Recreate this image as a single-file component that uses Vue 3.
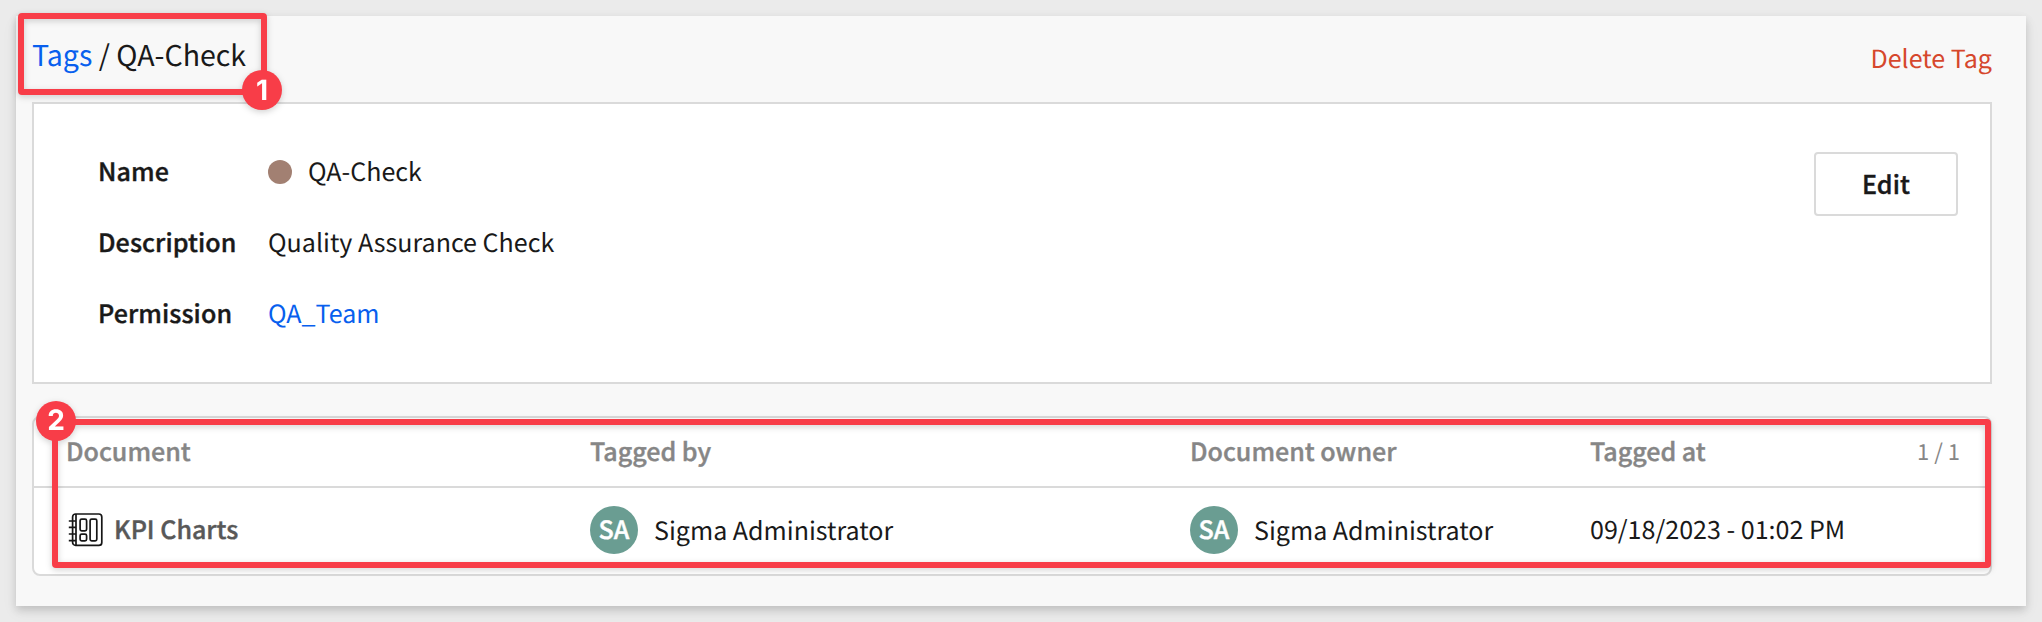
<script setup>
const columns = ['Document', 'Tagged by', 'Document owner', 'Tagged at']
const documents = [
  {
    name: 'KPI Charts',
    taggedBy: { initials: 'SA', name: 'Sigma Administrator' },
    owner: { initials: 'SA', name: 'Sigma Administrator' },
    taggedAt: '09/18/2023 - 01:02 PM',
  },
]
</script>

<template>
  <div class="page">
    <main class="panel">
      <header class="top">
        <h1 class="crumbs"><a class="link">Tags</a> / QA-Check</h1>
        <a class="delete">Delete Tag</a>
      </header>

      <section class="card">
        <dl class="fields">
          <div class="field">
            <dt>Name</dt>
            <dd><span class="dot"></span>QA-Check</dd>
          </div>
          <div class="field">
            <dt>Description</dt>
            <dd>Quality Assurance Check</dd>
          </div>
          <div class="field">
            <dt>Permission</dt>
            <dd><a class="link">QA_Team</a></dd>
          </div>
        </dl>
        <button class="edit">Edit</button>
      </section>

      <section class="table">
        <div class="row head">
          <span v-for="c in columns" :key="c">{{ c }}</span>
          <span class="count">1 / 1</span>
        </div>
        <div v-for="d in documents" :key="d.name" class="row body">
          <div class="doc">
            <svg class="icon" width="36" height="36" viewBox="0 0 36 36" fill="none" stroke="#161616" stroke-width="1.7">
              <rect x="4.6" y="2" width="29.2" height="31.4" rx="3" />
              <path d="M8 2V33.4M0.8 9H8M0.8 15.3H8M0.8 22H8M0.8 28.7H8" />
              <rect x="12.1" y="7.1" width="6.5" height="11.8" rx="1.6" />
              <rect x="12.1" y="22.1" width="6.5" height="6.8" rx="1.6" />
              <rect x="22.1" y="7.1" width="6.7" height="21.8" rx="1.6" />
            </svg>
            <span>{{ d.name }}</span>
          </div>
          <div class="person"><span class="avatar">{{ d.taggedBy.initials }}</span><span>{{ d.taggedBy.name }}</span></div>
          <div class="person"><span class="avatar">{{ d.owner.initials }}</span><span>{{ d.owner.name }}</span></div>
          <div class="when">{{ d.taggedAt }}</div>
        </div>
      </section>
    </main>

    <div class="callout first"><span class="badge">1</span></div>
    <div class="callout second"><span class="badge">2</span></div>
  </div>
</template>

<style>
body {
  margin: 0;
  background: #ebebeb;
}
</style>

<style scoped>
.page {
  position: relative;
  box-sizing: border-box;
  height: 622px;
  padding: 16px;
  overflow: hidden;
  background: #ebebeb;
  color: #191919;
  font: 400 25.05px/40px "Noto Sans CJK JP", "Noto Sans CJK SC", sans-serif;
  text-rendering: geometricPrecision;
  white-space: nowrap;
}
.panel {
  box-sizing: border-box;
  height: 590px;
  padding: 0 34px 0 16px;
  background: #f8f8f8;
  box-shadow: 0 4px 8px rgba(0, 0, 0, 0.15), 0 6px 16px rgba(0, 0, 0, 0.05);
}
.top {
  display: flex;
  justify-content: space-between;
  align-items: flex-start;
  height: 86px;
}
.crumbs {
  margin: 18px 0 0;
  font-weight: 400;
  font-size: 28.55px;
  line-height: 41px;
}
.link {
  color: #085fee;
}
.delete {
  margin-top: 22px;
  color: #d6472c;
}
.card {
  box-sizing: border-box;
  display: flex;
  justify-content: space-between;
  align-items: flex-start;
  height: 282px;
  padding: 47px 32px 0 64px;
  border: 2px solid #dadada;
  background: #fff;
}
.fields {
  display: grid;
  row-gap: 31px;
  margin: 0;
}
.field {
  display: grid;
  grid-template-columns: 170px auto;
}
.field dt {
  font-weight: 500;
  letter-spacing: 0.1px;
  -webkit-text-stroke: 0.4px currentColor;
}
.field dd {
  display: flex;
  align-items: center;
  margin: 0;
}
.dot {
  width: 24px;
  height: 24px;
  margin: 2px 16px 0 0;
  border-radius: 50%;
  background: #a28072;
}
.edit {
  box-sizing: border-box;
  width: 144px;
  height: 64px;
  margin-top: 1px;
  padding: 0 0 2px;
  border: 2px solid #dadada;
  border-radius: 4px;
  background: #fff;
  color: inherit;
  font: inherit;
  font-weight: 500;
  letter-spacing: 0.1px;
  -webkit-text-stroke: 0.4px currentColor;
}
.table {
  box-sizing: border-box;
  height: 160px;
  margin-top: 32px;
  border: 2px solid #dadada;
  border-radius: 8px;
  background: #fff;
}
.row {
  display: grid;
  grid-template-columns: 524px 600px 400px 200px 1fr;
  padding: 0 30px 0 32px;
}
.head {
  height: 68px;
  border-bottom: 2px solid #dadada;
  line-height: 66px;
  color: #868686;
  font-weight: 500;
  -webkit-text-stroke: 0.4px currentColor;
}
.count {
  font-weight: 400;
  font-size: 22px;
  text-align: right;
  -webkit-text-stroke: 0;
}
.body {
  height: 84px;
  align-items: center;
}
.doc,
.person {
  display: flex;
  align-items: center;
}
.doc {
  color: #585858;
  font-weight: 500;
  -webkit-text-stroke: 0.4px currentColor;
}
.doc span,
.when {
  padding-bottom: 2px;
}
.icon {
  margin: 0 10px 0 2px;
  -webkit-text-stroke: 0;
}
.avatar {
  width: 48px;
  height: 48px;
  margin-right: 16px;
  border-radius: 50%;
  background: #6a9d92;
  color: #fff;
  font-weight: 500;
  line-height: 46px;
  text-align: center;
  -webkit-text-stroke: 0.4px currentColor;
}
/* Numbered highlights lie over the page content. */
.callout {
  position: absolute;
  box-sizing: border-box;
  border: 6px solid #f83d48;
  border-radius: 4px;
  filter: drop-shadow(0 2px 3px rgba(0, 0, 0, 0.18));
}
.first {
  left: 18px;
  top: 12.5px;
  width: 249px;
  height: 82.5px;
}
.second {
  left: 52px;
  top: 419px;
  width: 1939px;
  height: 149px;
}
.badge {
  position: absolute;
  width: 40px;
  height: 40px;
  border-radius: 50%;
  background: #f83d48;
  color: #fff;
  font: 700 28px/40px Inter, sans-serif;
  text-align: center;
}
.first .badge {
  right: -21px;
  bottom: -21px;
}
.second .badge {
  left: -22px;
  top: -24px;
  line-height: 38px;
}
</style>
